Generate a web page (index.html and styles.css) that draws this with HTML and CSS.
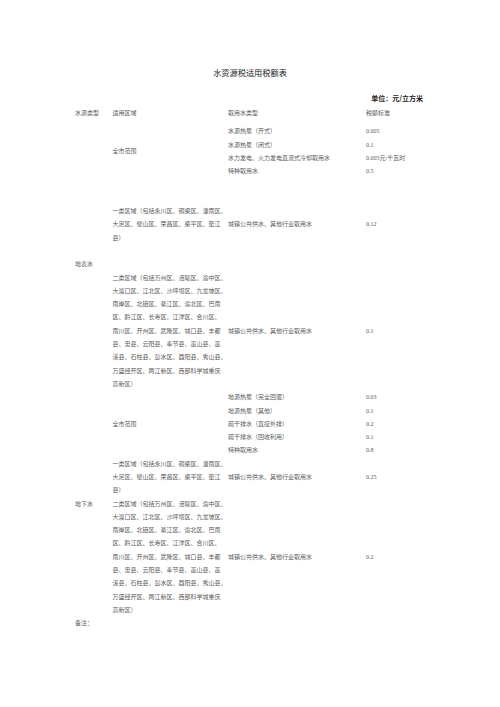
FILE: index.html
```html
<!DOCTYPE html>
<html lang="zh-CN">
<head>
<meta charset="utf-8">
<title>水资源税适用税额表</title>
<link rel="stylesheet" href="styles.css">
</head>
<body>
<div class="page">
  <h1 class="title">水资源税适用税额表</h1>
  <div class="unit">单位：元/立方米</div>

  <div class="table">
    <div class="row head">
      <div class="c1">水源类型</div>
      <div class="c2">适用区域</div>
      <div class="c3">取用水类型</div>
      <div class="c4">税额标准</div>
    </div>

    <div class="group">
      <div class="c1"></div>
      <div class="c2 region">全市范围</div>
      <div class="uses">
        <div class="use"><span class="c3">水源热泵（开式）</span><span class="c4">0.005</span></div>
        <div class="use"><span class="c3">水源热泵（闭式）</span><span class="c4">0.1</span></div>
        <div class="use"><span class="c3">水力发电、火力发电直流式冷却取用水</span><span class="c4">0.005元/千瓦时</span></div>
        <div class="use"><span class="c3">特种取用水</span><span class="c4">0.5</span></div>
      </div>
    </div>

    <div class="spacer two"></div>

    <div class="group">
      <div class="c1"></div>
      <div class="c2 region">一类区域（包括永川区、铜梁区、潼南区、<br>大足区、璧山区、荣昌区、梁平区、垫江<br>县）</div>
      <div class="uses">
        <div class="use"><span class="c3">城镇公共供水、其他行业取用水</span><span class="c4">0.12</span></div>
      </div>
    </div>

    <div class="spacer one"></div>

    <div class="row">
      <div class="c1">地表水</div>
    </div>

    <div class="group">
      <div class="c1"></div>
      <div class="c2 region">二类区域（包括万州区、涪陵区、渝中区、<br>大渡口区、江北区、沙坪坝区、九龙坡区、<br>南岸区、北碚区、綦江区、渝北区、巴南<br>区、黔江区、长寿区、江津区、合川区、<br>南川区、开州区、武隆区、城口县、丰都<br>县、忠县、云阳县、奉节县、巫山县、巫<br>溪县、石柱县、彭水区、酉阳县、秀山县、<br>万盛经开区、两江新区、西部科学城重庆<br>高新区）</div>
      <div class="uses">
        <div class="use"><span class="c3">城镇公共供水、其他行业取用水</span><span class="c4">0.1</span></div>
      </div>
    </div>

    <div class="group">
      <div class="c1"></div>
      <div class="c2 region">全市范围</div>
      <div class="uses">
        <div class="use"><span class="c3">地源热泵（完全回灌）</span><span class="c4">0.03</span></div>
        <div class="use"><span class="c3">地源热泵（其他）</span><span class="c4">0.1</span></div>
        <div class="use"><span class="c3">疏干排水（直接外排）</span><span class="c4">0.2</span></div>
        <div class="use"><span class="c3">疏干排水（回收利用）</span><span class="c4">0.1</span></div>
        <div class="use"><span class="c3">特种取用水</span><span class="c4">0.8</span></div>
      </div>
    </div>

    <div class="group">
      <div class="c1"></div>
      <div class="c2 region">一类区域（包括永川区、铜梁区、潼南区、<br>大足区、璧山区、荣昌区、梁平区、垫江<br>县）</div>
      <div class="uses">
        <div class="use"><span class="c3">城镇公共供水、其他行业取用水</span><span class="c4">0.25</span></div>
      </div>
    </div>

    <div class="group">
      <div class="c1 label-top">地下水</div>
      <div class="c2 region">二类区域（包括万州区、涪陵区、渝中区、<br>大渡口区、江北区、沙坪坝区、九龙坡区、<br>南岸区、北碚区、綦江区、渝北区、巴南<br>区、黔江区、长寿区、江津区、合川区、<br>南川区、开州区、武隆区、城口县、丰都<br>县、忠县、云阳县、奉节县、巫山县、巫<br>溪县、石柱县、彭水区、酉阳县、秀山县、<br>万盛经开区、两江新区、西部科学城重庆<br>高新区）</div>
      <div class="uses">
        <div class="use"><span class="c3">城镇公共供水、其他行业取用水</span><span class="c4">0.2</span></div>
      </div>
    </div>

    <div class="row">
      <div class="c1">备注：</div>
    </div>
  </div>
</div>
</body>
</html>
```

FILE: styles.css
```css
html, body {
  margin: 0;
  padding: 0;
  background: #ffffff;
}

.page {
  width: 500px;
  height: 707px;
  box-sizing: border-box;
  padding-top: 66px;
  font-family: "Liberation Serif", "Noto Sans CJK SC", serif;
  color: #5a5a5a;
}

.title {
  margin: 0;
  text-align: center;
  font-family: "Noto Sans CJK SC", sans-serif;
  font-weight: 400;
  font-size: 8.2px;
  line-height: 12px;
  color: #222222;
}

.unit {
  margin-top: 15px;
  padding-right: 77px;
  text-align: right;
  font-family: "Noto Sans CJK SC", sans-serif;
  font-weight: 700;
  font-size: 7px;
  line-height: 10px;
  color: #222222;
}

.table {
  margin-top: 4.3px;
  padding-left: 75px;
  font-size: 6px;
  line-height: 13.3px;
}

.row,
.group {
  display: flex;
}

.head {
  margin-bottom: 4.7px;
}

.c1 {
  flex: 0 0 37.5px;
  white-space: nowrap;
}

.c2 {
  flex: 0 0 115.5px;
  white-space: nowrap;
}

.c3 {
  flex: 0 0 138px;
  white-space: nowrap;
}

.c4 {
  white-space: nowrap;
}

.region {
  display: flex;
  align-items: center;
}

.uses {
  display: flex;
  flex-direction: column;
  justify-content: center;
}

.use {
  display: flex;
}

.label-top {
  align-self: flex-start;
}

.spacer.one {
  height: 13.3px;
}

.spacer.two {
  height: 26.6px;
}
```
